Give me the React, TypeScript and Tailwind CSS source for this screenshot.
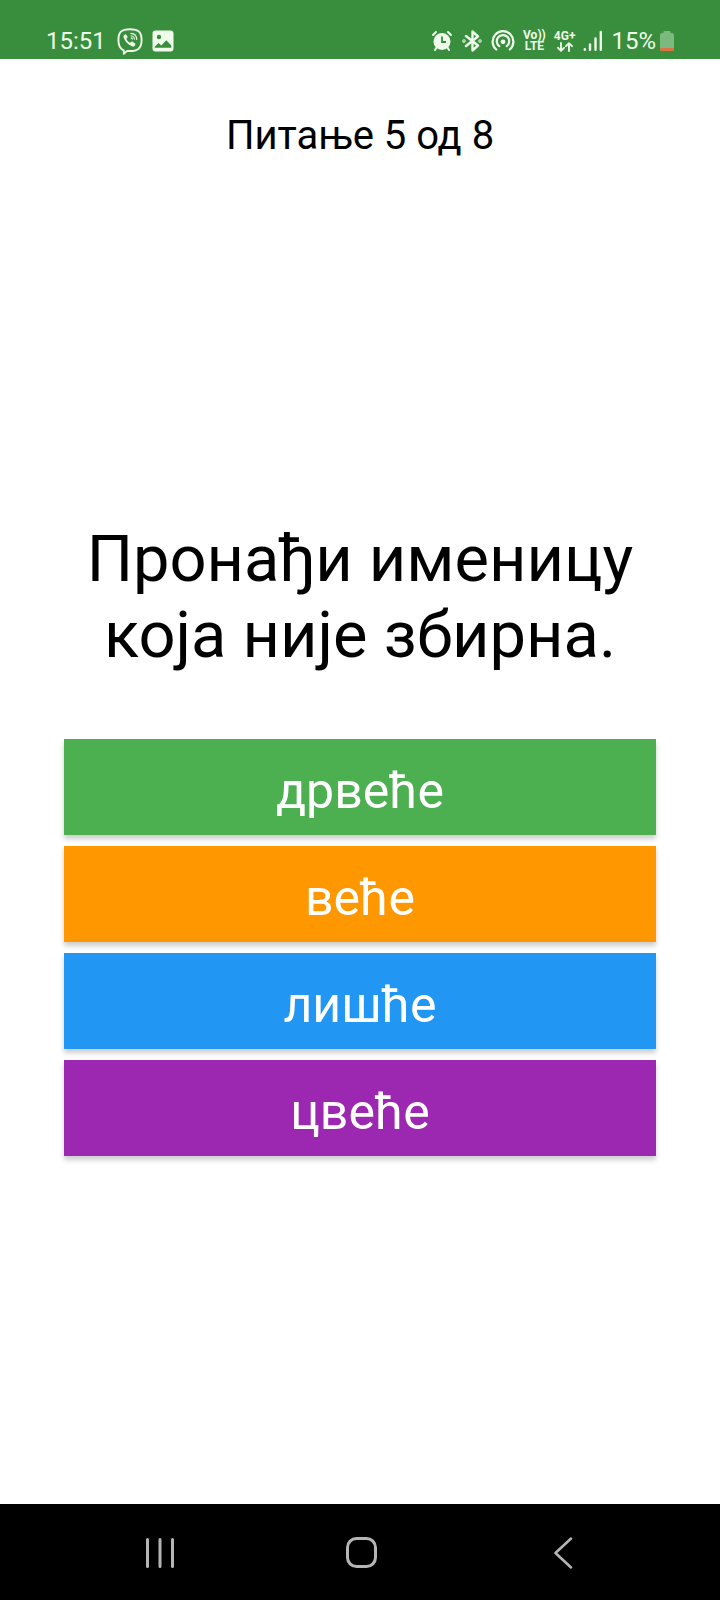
const answers = [
  { text: 'дрвеће', color: 'bg-[#4caf50]' },
  { text: 'веће', color: 'bg-[#ff9800]' },
  { text: 'лишће', color: 'bg-[#2196f3]' },
  { text: 'цвеће', color: 'bg-[#9c27b0]' },
];

function ViberIcon() {
  return (
    <svg className="h-7 w-7" viewBox="0 0 28 28" fill="none" stroke="currentColor" strokeLinecap="round">
      <path
        d="M14 2.2C5.4 2.2 2.4 5 2.4 13c0 6 1.7 9 5.4 10.3v3.5l3.4-2.9c10.5.8 14.4-2.5 14.4-10.9C25.6 5 22.6 2.2 14 2.2z"
        strokeWidth="1.9"
        strokeLinejoin="round"
      />
      <path
        d="M9 7.4c-1.500.8-1.900 1.800-1.400 3.200 1.500 4 4.300 7 8.300 8.700 1.500.6 2.500.1 3.300-1.400.4-.8.2-1.200-.5-1.700l-2-1.400c-.8-.5-1.300-.4-1.900.4-.5.600-.9.600-1.700.1-1.400-.9-2.200-2-2.600-3.200-.2-.6 0-.9.500-1.200.7-.4.800-.9.400-1.600L10.300 7.800c-.4-.6-.8-.7-1.300-.4z"
        fill="currentColor"
        stroke="none"
      />
      <path d="M14.800 6.400c3.700.2 5.800 2.500 5.900 6.100M15 8.700c2.200.2 3.300 1.400 3.400 3.600M15.200 10.900c.7.1 1 .5 1.100 1.200" strokeWidth="1.1" />
    </svg>
  );
}

function PictureIcon() {
  return (
    <svg className="h-[22px] w-[22px]" viewBox="0 0 22 22">
      <path
        fillRule="evenodd"
        fill="currentColor"
        d="M3.500.5h15a3 3 0 0 1 3 3v15a3 3 0 0 1-3 3h-15a3 3 0 0 1-3-3v-15a3 3 0 0 1 3-3zM7 4.800a2.200 2.200 0 1 0 0 4.400 2.200 2.200 0 0 0 0-4.400zM2.700 17.800h16.600v-2.400l-5-5.100-5 5.100-2.800-2.300-3.800 3.700z"
      />
    </svg>
  );
}

function AlarmIcon() {
  return (
    <svg className="h-[22px] w-[22px]" viewBox="0 0 22 22">
      <circle cx="11" cy="11.500" r="8.500" fill="currentColor" />
      <g fill="none" stroke="currentColor" strokeWidth="2" strokeLinecap="round">
        <path d="M2 5l3-3M20 5l-3-3M5.500 17.500L4 20M16.500 17.500L18 20" />
      </g>
      <path d="M11 6.500v5.500h4" fill="none" stroke="#388e3c" strokeWidth="1.8" />
    </svg>
  );
}

function BluetoothIcon() {
  return (
    <svg className="h-[22px] w-[22px]" viewBox="0 0 22 22" fill="none" stroke="currentColor" strokeWidth="2.4" strokeLinejoin="round" strokeLinecap="round">
      <path d="M5 6l12 9.500-5.500 5v-19L17 6.500 5 16" />
      <circle cx="3" cy="11" r=".5" />
      <circle cx="19" cy="11" r=".5" />
    </svg>
  );
}

function HotspotIcon() {
  return (
    <svg className="h-6 w-6" viewBox="0 0 24 24" fill="none" stroke="currentColor" strokeWidth="2.2" strokeLinecap="round">
      <path d="M5.300 20.500a10.400 10.400 0 1 1 13.400 0" />
      <path d="M8.300 17.200a6.200 6.200 0 1 1 7.400 0" />
      <circle cx="12" cy="12.800" r="2.400" fill="currentColor" stroke="none" />
    </svg>
  );
}

function DataArrowsIcon() {
  return (
    <svg className="h-[10px] w-4" viewBox="0 0 16 10" fill="none" stroke="currentColor" strokeWidth="1.9" strokeLinecap="round" strokeLinejoin="round">
      <path d="M4 1v7.500M1 5.800l3 3 3-3M12 9V1.500M9 4.200l3-3 3 3" />
    </svg>
  );
}

function SignalIcon() {
  return (
    <svg className="h-[22px] w-5" viewBox="0 0 20 22" fill="none" stroke="currentColor" strokeWidth="2.4" strokeLinecap="round">
      <path d="M1.800 19.200v.6M7 14.500v5.300M12.500 8.500v11.300M17.800 2v17.800" />
    </svg>
  );
}

function BatteryIcon() {
  return (
    <svg className="h-[22px] w-4" viewBox="0 0 16 22">
      <path d="M5.500 1h5a1 1 0 0 1 1 1v1H13a2 2 0 0 1 2 2v14a2 2 0 0 1-2 2H3a2 2 0 0 1-2-2V5a2 2 0 0 1 2-2h1.500V2a1 1 0 0 1 1-1z" fill="#7cb97f" />
      <path d="M1 18h14v1a2 2 0 0 1-2 2H3a2 2 0 0 1-2-2z" fill="#dd7444" />
    </svg>
  );
}

export default function App() {
  return (
    <div className="flex min-h-screen flex-col bg-white font-['Roboto','Noto_Sans',sans-serif] text-black">
      <header className="flex h-[59px] items-end justify-between bg-[#388e3c] pr-[45px] pb-1 pl-[46px] text-[#effbea]">
        <div className="flex h-7 items-center gap-2">
          <time className="pr-0.5 text-2xl leading-7">15:51</time>
          <ViberIcon />
          <PictureIcon />
        </div>
        <div className="flex h-7 items-center gap-2">
          <AlarmIcon />
          <BluetoothIcon />
          <HotspotIcon />
          <div className="flex flex-col items-center text-[12px] leading-[11px] font-bold">
            <span>Vo))</span>
            <span>LTE</span>
          </div>
          <div className="flex flex-col items-center text-[12px] leading-[11px] font-bold">
            <span>4G+</span>
            <DataArrowsIcon />
          </div>
          <SignalIcon />
          <div className="flex items-center gap-[3px]">
            <span className="text-2xl leading-7">15%</span>
            <BatteryIcon />
          </div>
        </div>
      </header>

      <main className="flex flex-1 flex-col px-16 pt-[53px]">
        <p className="text-center text-[40px] leading-[48px]">Питање 5 од 8</p>
        <h1 className="mt-[361px] text-center text-[65px] leading-[76px] font-normal">Пронађи именицу која није збирна.</h1>
        <div className="mt-[66px] flex flex-col gap-[11px]">
          {answers.map((answer) => (
            <button
              key={answer.text}
              type="button"
              className={`${answer.color} h-24 pt-2 text-center text-[50px] leading-[60px] text-white shadow-[0_4px_5px_rgba(0,0,0,0.2)]`}
            >
              {answer.text}
            </button>
          ))}
        </div>
      </main>

      <nav className="grid h-24 grid-cols-[320px_1fr_316px] bg-black pt-0.5 text-[#b5b5b5]">
        <button type="button" aria-label="Недавне апликације" className="flex items-center justify-center">
          <svg className="h-8 w-8" viewBox="0 0 32 32" fill="none" stroke="currentColor" strokeWidth="3" strokeLinecap="round">
            <path d="M3.500 2.500v27M16 2.500v27M28.500 2.500v27" />
          </svg>
        </button>
        <button type="button" aria-label="Почетна" className="flex items-center justify-center">
          <svg className="h-8 w-8" viewBox="0 0 32 32" fill="none" stroke="currentColor" strokeWidth="3">
            <rect x="1.500" y="1.500" width="28" height="28" rx="9" />
          </svg>
        </button>
        <button type="button" aria-label="Назад" className="flex items-center justify-center">
          <svg className="h-8 w-8" viewBox="0 0 32 32" fill="none" stroke="currentColor" strokeWidth="2.5" strokeLinecap="round" strokeLinejoin="round">
            <path d="M25 1.500L9.500 16l15.500 14.500" />
          </svg>
        </button>
      </nav>
    </div>
  );
}
